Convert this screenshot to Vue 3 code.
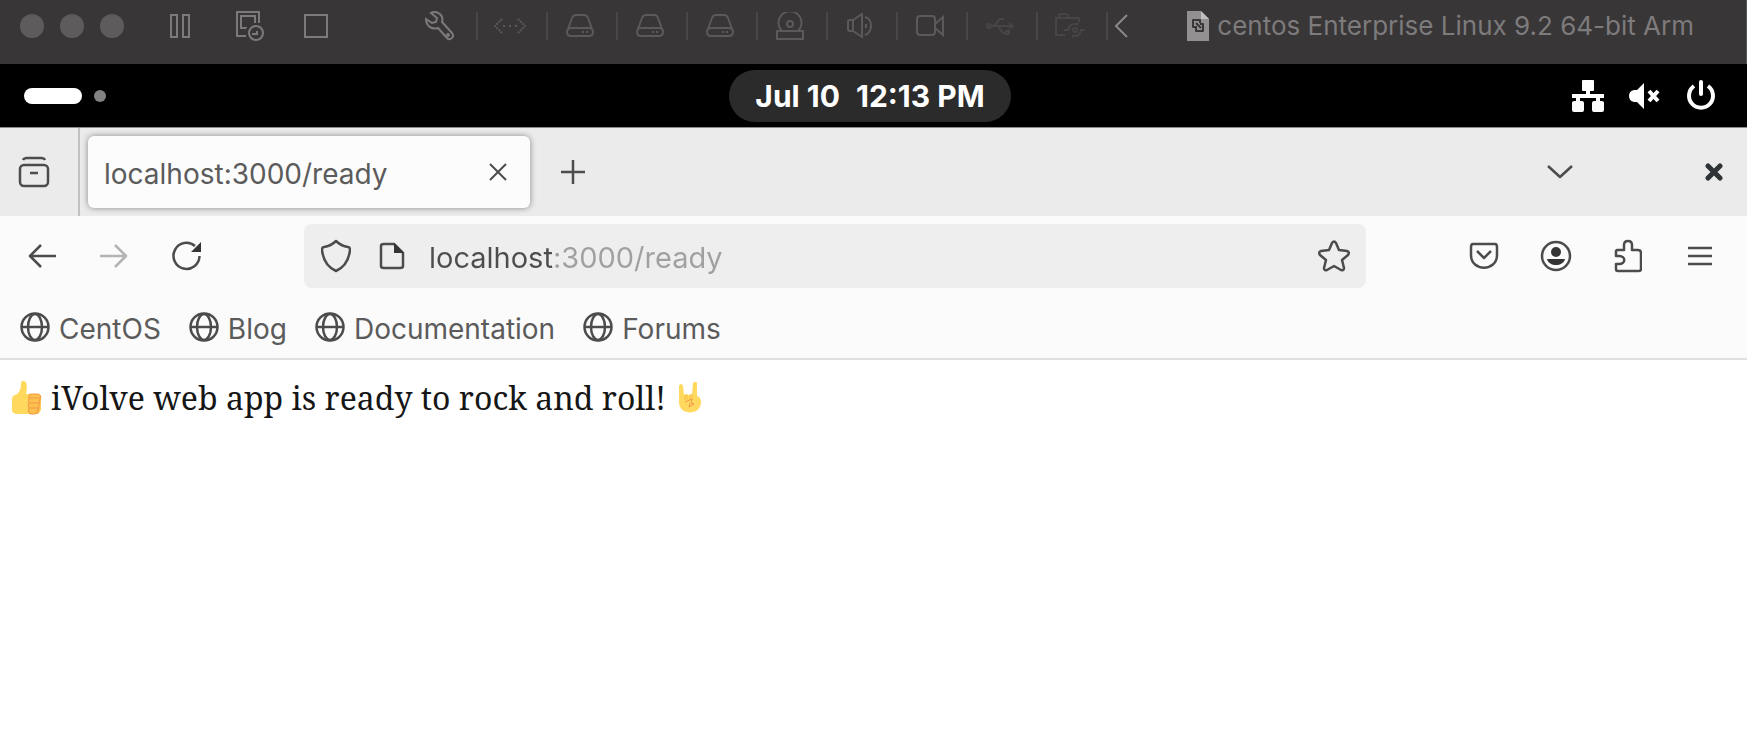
<script setup>
import { ref } from 'vue'

const address = ref('localhost:3000/ready')
const bookmarks = ['CentOS', 'Blog', 'Documentation', 'Forums']
</script>

<template>
  <div class="screen">
    <header class="vm-bar">
      <div class="lights"><i></i><i></i><i></i></div>
      <button class="vm-btn pause" aria-label="Pause">
        <svg width="20" height="24" viewBox="0 0 20 24"><path d="M1 1h6v22H1zM13 1h6v22h-6z" /></svg>
      </button>
      <button class="vm-btn snap" aria-label="Snapshot">
        <svg width="28" height="30" viewBox="0 0 28 30"><path d="M10 25H1V1h22v11M10 17H5V5h14v7M10 17v-1" /><circle cx="20" cy="22" r="7" /><path d="M21 20v3h-5" /></svg>
      </button>
      <button class="vm-btn stop" aria-label="Full screen">
        <svg width="24" height="24" viewBox="0 0 24 24"><path d="M1 1h22v22H1z" /></svg>
      </button>
      <button class="vm-btn wrench" aria-label="Settings">
        <svg width="30" height="30" viewBox="0 0 30 30"><path d="M6 2c6-3 13 2 11 9l10 11c3 4-2 8-5 5L13 17C7 19 1 15 1 8l6 4 4-1 1-4z" /><circle cx="23" cy="24" r="1" /></svg>
      </button>
      <div class="devices">
        <button class="dev" aria-label="Network">
          <svg width="32" height="16" viewBox="0 0 32 16"><path d="M8 1L1 8l7 7M24 1l7 7-7 7" stroke-dasharray="2 1" /><path d="M9 8h2M15 8h2M21 8h2" /></svg>
        </button>
        <button v-for="n in 3" :key="n" class="dev" :aria-label="'Hard disk ' + n">
          <svg width="28" height="24" viewBox="0 0 28 24"><path d="M2 15L6 4q1-3 4-3h8q3 0 4 3l4 11M5 14h18q4 0 4 4t-4 4H5q-4 0-4-4t4-4z" /><path d="M16 18h2M20 18h2" /></svg>
        </button>
        <button class="dev" aria-label="CD drive">
          <svg width="28" height="28" viewBox="0 0 28 28"><path d="M6 19a11.500 11.500 0 1 1 16 0M1 19h26v8H1z" /><circle cx="14" cy="12" r="3" /></svg>
        </button>
        <button class="dev" aria-label="Sound">
          <svg width="28" height="26" viewBox="0 0 28 26"><path d="M7 7H4Q2 7 2 9v7q0 2 2 2h3zM7 7l9-6v23l-9-6M19 4c8 2 8 15 0 18M20 11v4" /></svg>
        </button>
        <button class="dev" aria-label="Camera">
          <svg width="28" height="22" viewBox="0 0 28 22"><path d="M4 1h12q3 0 3 3v13q0 3-3 3H4q-3 0-3-3V4q0-3 3-3zM19 9l8-7v18l-8-7" /></svg>
        </button>
        <button class="dev faint" aria-label="USB">
          <svg width="28" height="18" viewBox="0 0 28 18"><path d="M3 9h21M8 9l6-7h4M12 9l5 7h4" /><circle cx="3" cy="9" r="2" /><path d="M24 7l3 2-3 2zM20 14h3v3h-3z" /></svg>
        </button>
        <button class="dev faint" aria-label="Shared folders">
          <svg width="30" height="26" viewBox="0 0 30 26"><path d="M10 22H1V5h23v4M4 5V2q0-1 1-1h6q2 0 3 4M9 17h4q1-6 7-6h4M30 17h-4q-1 6-6 6h-3" /><circle cx="20" cy="17" r="2" /></svg>
        </button>
      </div>
      <button class="vm-btn collapse" aria-label="Collapse">
        <svg width="14" height="24" viewBox="0 0 14 24"><path d="M13 1L2 12l11 11" /></svg>
      </button>
      <div class="vm-title">
        <svg width="22" height="30" viewBox="0 0 22 30"><path d="M0 0h14l8 8v22H0z" fill="#929091" /><path d="M14 0v8h8z" fill="#c0bfbf" /><path d="M10 16H6V9h7v3M13 13h3v7H9v-3M9 12l5 5" fill="none" stroke="#393637" stroke-width="2" stroke-linejoin="round" /></svg>
        <span>centos Enterprise Linux 9.2 64-bit Arm</span>
      </div>
    </header>

    <div class="gnome">
      <div class="spaces"><b></b><i></i></div>
      <button class="clock"><span>Jul 10</span><span>12:13 PM</span></button>
      <div class="status">
        <svg width="32" height="32" viewBox="0 0 32 32" fill="#fff"><rect x="10" width="12" height="11" rx="1" /><path d="M14 10h4v4h14v4h-4v4h-4v-4H8v4H4v-4H0v-4h14z" /><rect y="21" width="12" height="11" rx="2" /><rect x="20" y="21" width="12" height="11" rx="2" /></svg>
        <svg width="32" height="28" viewBox="0 0 32 28"><path d="M5 8h3l7-7v26l-7-7H5q-5-1-5-6t5-6z" fill="#fff" /><path d="M20 9l9 10M29 9l-9 10" stroke="#fff" stroke-width="4" /></svg>
        <svg width="30" height="32" viewBox="0 0 30 32" fill="none" stroke="#fff" stroke-width="4"><path d="M8 6a12 12 0 1 0 14 0" /><path d="M15 2v12" stroke-linecap="round" /></svg>
      </div>
    </div>

    <div class="tabs">
      <button class="icon view" aria-label="Recent browsing">
        <svg width="32" height="32" viewBox="0 0 32 32"><rect x="2" y="9" width="28" height="21" rx="4" /><path d="M5 4q1-2 4-2h14q3 0 4 2M12 17h8" /></svg>
      </button>
      <div class="tab">
        <span class="label">localhost:3000/ready</span>
        <button class="icon" aria-label="Close tab"><svg class="thin" width="18" height="18" viewBox="0 0 18 18"><path d="M1 1l16 16M17 1L1 17" /></svg></button>
      </div>
      <button class="icon plus" aria-label="New tab"><svg width="24" height="24" viewBox="0 0 24 24"><path d="M12 0v24M0 12h24" /></svg></button>
      <button class="icon list" aria-label="List all tabs"><svg width="26" height="16" viewBox="0 0 26 16"><path d="M1 2l12 11L25 2" /></svg></button>
      <button class="icon quit" aria-label="Close window"><svg width="18" height="18" viewBox="0 0 18 18"><path class="heavy" d="M3 3l12 12M15 3L3 15" /></svg></button>
    </div>

    <nav class="toolbar">
      <div class="nav">
        <button class="icon" aria-label="Back"><svg width="28" height="24" viewBox="0 0 28 24"><path d="M28 12H2M13 1L2 12l11 11" /></svg></button>
        <button class="icon off" aria-label="Forward" disabled><svg width="28" height="24" viewBox="0 0 28 24"><path d="M0 12h26M15 1l11 11-11 11" /></svg></button>
        <button class="icon" aria-label="Reload"><svg width="30" height="30" viewBox="0 0 30 30"><path d="M27.500 15A13 13 0 1 1 23 5" /><path class="solid" d="M29 1v10H19z" /></svg></button>
      </div>
      <div class="url">
        <svg class="line" width="30" height="34" viewBox="0 0 30 34"><path d="M15 2q5 5 12 6 2 0 2 3c-1 9-5 17-14 21C6 28 2 20 1 11q0-3 2-3 7-1 12-6z" /></svg>
        <svg class="line page" width="26" height="28" viewBox="0 0 26 28"><path d="M5 2h10l9 9v13q0 2-3 2H5q-3 0-3-2V4q0-2 3-2z" /><path class="solid" d="M15 1l10 10H15z" /></svg>
        <input v-model="address" class="address label" type="text" aria-label="Address" spellcheck="false" />
        <button class="icon" aria-label="Bookmark this page"><svg width="32" height="32" viewBox="0 0 32 32"><path d="M14 3q2-3 4 0l3 7 8 1q3 1 1 4l-6 5 2 8q0 3-3 2l-7-4-7 4q-3 1-3-2l2-8-6-5q-2-3 1-4l8-1z" /></svg></button>
      </div>
      <div class="tools">
        <button class="icon" aria-label="Pocket"><svg width="30" height="28" viewBox="0 0 30 28"><path d="M4 2h22q2 0 2 3v8c0 17-26 17-26 0V5q0-3 2-3zM8 9l7 7 7-7" /></svg></button>
        <button class="icon" aria-label="Account"><svg width="32" height="32" viewBox="0 0 32 32"><circle cx="16" cy="16" r="14" /><circle class="solid" cx="16" cy="12" r="5" /><path class="solid" d="M7 19h18c-2 8-16 8-18 0z" /></svg></button>
        <button class="icon" aria-label="Extensions"><svg width="28" height="34" viewBox="0 0 28 34"><path d="M3 11h7V6q0-4 4-4t4 4v5h6q3 0 3 3v16q0 2-2 2H4q-2 0-2-2v-5h3c7 0 7-8 0-8H2v-5z" /></svg></button>
        <button class="icon" aria-label="Menu"><svg width="24" height="20" viewBox="0 0 24 20"><path d="M0 2h24M0 10h24M0 18h24" /></svg></button>
      </div>
    </nav>

    <div class="bookmarks">
      <a v-for="b in bookmarks" :key="b" href="#">
        <svg class="line" width="30" height="30" viewBox="0 0 30 30"><circle cx="15" cy="15" r="13.500" /><path d="M1 15h28" /><ellipse cx="15" cy="15" rx="7" ry="13" /></svg>
        <span class="label">{{ b }}</span>
      </a>
    </div>

    <main class="content">
      <svg width="30" height="34" viewBox="0 0 30 34" role="img" aria-label="thumbs up"><path d="M0 18q0-3 3-4 6-2 6-11 0-4 3-3c4 1 3 8 2 13h12q3 1 3 5v11q-2 4-5 4H6q-6 0-6-4z" fill="#ffd95e" /><path d="M18 13h9q3 2 2 5 0 12-3 15h-8q-3-3-1-6-2-3 0-5-1-3 0-5-1-3 1-4z" fill="#fcc04e" /><path d="M18 13h8q4 1 2 5l-2 12q-1 3-3 3h-5q-3-3-1-6-2-3 0-5-1-3 0-5-1-3 1-4zM17 17h11M17 22h11M17 27h10" fill="none" stroke="#f29a45" /></svg>
      <p>iVolve web app is ready to rock and roll!</p>
      <svg width="22" height="32" viewBox="0 0 22 32" role="img" aria-label="horns"><path d="M0 4q2-4 4 0l1 9h8l1-12q2-3 4 0v13q4 1 4 6c0 14-22 14-22 0z" fill="#ffd95e" /><path d="M5 13q2-2 4 0v5H5zM10 13q2-2 4 0v5h-4z" fill="#fccb55" /><path d="M6 20l7-3-1 4 3 1-5 3 1-4" fill="none" stroke="#f2984a" /></svg>
    </main>
  </div>
</template>

<style>
body { margin: 0; background: #fff; }
</style>

<style scoped>
.screen { min-height: 100vh; background: #fff; font-family: Inter, "Liberation Sans", sans-serif; color: #5b5b5b; }
button { appearance: none; border: 0; margin: 0; padding: 0; background: none; color: inherit; font: inherit; display: flex; align-items: center; justify-content: center; }
svg { display: block; flex: none; }
.vm-bar { height: 64px; box-sizing: border-box; padding: 0 53px 12px 20px; display: flex; align-items: center; background: #393637; box-shadow: inset -1px 0 #565455; color: #7c7a7b; }
.vm-bar button svg { fill: none; stroke: currentColor; stroke-width: 2; }
.lights { display: flex; gap: 16px; }
.lights i { width: 24px; height: 24px; border-radius: 50%; background: #5d5b5c; }
.pause { margin-left: 46px; }
.snap { margin-left: 46px; }
.stop { margin-left: 40px; }
.wrench { margin-left: 97px; }
.devices { display: flex; margin-left: 21px; color: #5b595a; border-right: 2px solid #484647; }
.vm-bar .dev { width: 70px; height: 28px; box-sizing: border-box; padding-right: 4px; border-left: 2px solid #484647; }
.vm-bar .faint svg { color: #474546; }
.collapse { margin-left: 6px; }
.vm-bar .collapse svg { color: #8a8889; }
.vm-title { margin-left: auto; display: flex; align-items: center; gap: 8px; font-size: 26px; line-height: 32px; color: #7d7b7c; white-space: nowrap; }
.gnome { height: 63px; display: grid; grid-template-columns: 1fr auto 1fr; align-items: center; background: #000; padding: 0 31px 0 24px; }
.spaces { display: flex; align-items: center; gap: 12px; }
.spaces b { width: 58px; height: 16px; border-radius: 8px; background: #fff; }
.spaces i { width: 12px; height: 12px; border-radius: 50%; background: #828282; }
.clock { height: 52px; padding: 0 26px; border-radius: 26px; gap: 16px; background: #2b2b2b; color: #fff; font-size: 30px; font-weight: 700; white-space: nowrap; }
.status { display: flex; align-items: center; justify-content: flex-end; gap: 25px; }
.icon svg, .line { fill: none; stroke: #4c4c4c; stroke-width: 2.500; stroke-linejoin: round; }
.icon .thin { stroke-width: 2; }
.icon .solid, .line .solid { fill: #353535; stroke: none; }
.icon .heavy { stroke: #2e3436; stroke-width: 5; stroke-linecap: round; }
.off svg { stroke: #b4b4b4; }
.label { padding-top: 3px; }
.tabs { height: 89px; box-sizing: border-box; border-top: 1px solid #8b8b8b; background: #ebebeb; display: flex; align-items: center; padding-right: 24px; }
.view { height: 100%; width: 80px; box-sizing: border-box; padding-right: 10px; border-right: 2px solid #c1c1c1; }
.tab { width: 442px; height: 72px; box-sizing: border-box; margin-left: 8px; padding: 0 23px 0 16px; border-radius: 6px; background: #fcfcfc; box-shadow: 0 0 6px #0000006b; display: flex; align-items: center; justify-content: space-between; font-size: 28px; }
.plus { margin-left: 31px; }
.list { margin-left: auto; }
.quit { margin-left: 132px; }
.toolbar { height: 80px; box-sizing: border-box; padding: 0 32px 0 28px; display: flex; align-items: center; background: #fbfbfb; }
.nav { display: flex; gap: 44px; width: 276px; }
.url { flex: 1; height: 64px; box-sizing: border-box; border-radius: 8px; background: #eee; padding: 0 16px 0 17px; display: flex; align-items: center; }
.page { margin-left: 28px; }
.address { flex: 1; min-width: 0; margin-left: 24px; padding: 3px 0 0; border: 0; outline: 0; font: 29px/36px Inter, "Liberation Sans", sans-serif; color: transparent; caret-color: #4d4d4d; background: linear-gradient(to right, #4d4d4d 124px, #a0a0a0 124px); -webkit-background-clip: text; background-clip: text; }
.tools { display: flex; align-items: center; gap: 42px; margin-left: 103px; }
.tools .icon { width: 30px; }
.bookmarks { height: 64px; box-sizing: border-box; border-bottom: 2px solid #e0e0e0; background: #fbfbfb; padding: 0 20px; display: flex; align-items: center; gap: 28px; }
.bookmarks a { display: flex; align-items: center; gap: 9px; color: #5b5b5b; text-decoration: none; font-size: 28px; }
.content { display: flex; align-items: center; padding: 18px 12px; gap: 9px; color: #161616; }
.content p { margin: 0 4px 0 0; font: 32px/40px "Noto Serif", "DejaVu Serif Condensed", "DejaVu Serif", serif; }
</style>
